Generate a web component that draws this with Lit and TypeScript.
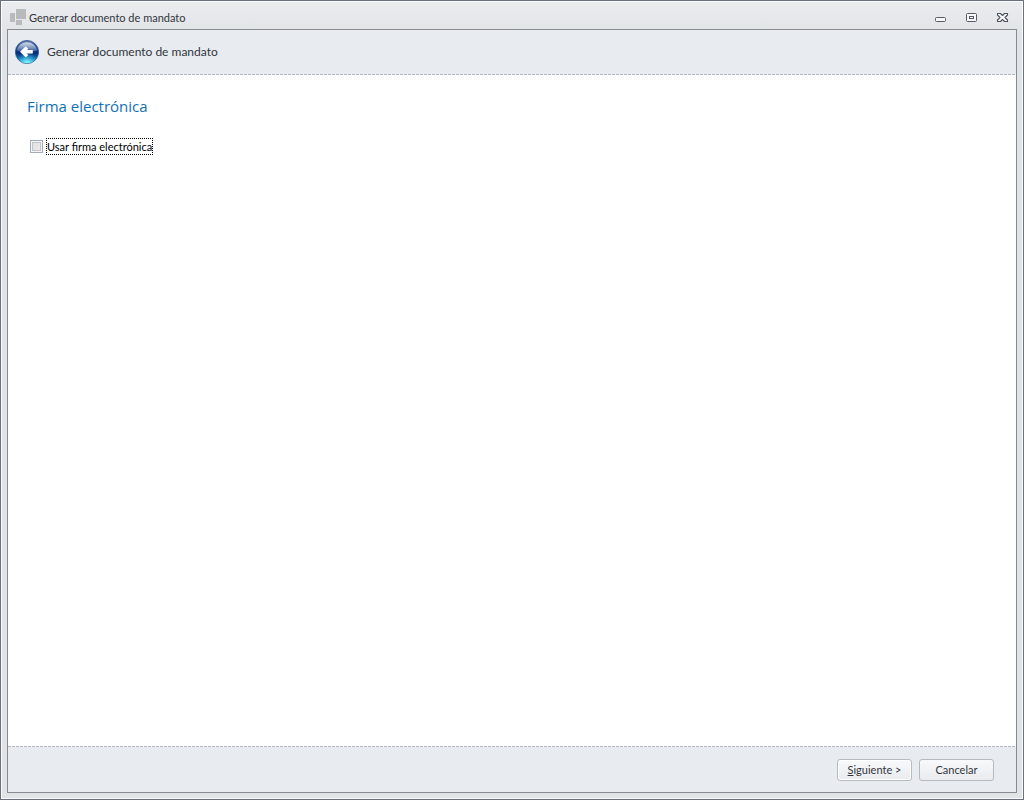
import { LitElement, html, css, svg } from "lit";
import { customElement, state } from "lit/decorators.js";

const TITLE = "Generar documento de mandato";

const appIcon = svg`
  <svg width="16" height="16" viewBox="0 0 16 16" shape-rendering="crispEdges" aria-hidden="true">
    <g fill="#b9babb">
      <rect x="0" y="4" width="5" height="9"></rect>
      <rect x="6" y="0" width="10" height="10"></rect>
      <rect x="6" y="11" width="6" height="5"></rect>
    </g>
  </svg>`;

const backIcon = svg`
  <svg width="26" height="26" viewBox="0 0 26 26" aria-hidden="true">
    <defs>
      <linearGradient id="ball" x1="0" y1="0" x2="0" y2="1">
        <stop offset="0" stop-color="#5a7cb4"></stop>
        <stop offset="0.4" stop-color="#17408c"></stop>
        <stop offset="0.55" stop-color="#052a78"></stop>
        <stop offset="0.78" stop-color="#1272b4"></stop>
        <stop offset="1" stop-color="#5fe6f4"></stop>
      </linearGradient>
      <linearGradient id="shine" x1="0" y1="0" x2="0" y2="1">
        <stop offset="0" stop-color="#ffffff" stop-opacity="0.75"></stop>
        <stop offset="1" stop-color="#ffffff" stop-opacity="0.12"></stop>
      </linearGradient>
      <radialGradient id="glow" cx="0.5" cy="1" r="0.5">
        <stop offset="0" stop-color="#8dfcff"></stop>
        <stop offset="1" stop-color="#2bb4e0" stop-opacity="0"></stop>
      </radialGradient>
    </defs>
    <circle cx="13" cy="13" r="11.6" fill="url(#ball)" stroke="#3a5a94" stroke-width="0.8"></circle>
    <circle cx="13" cy="13" r="11.2" fill="url(#glow)"></circle>
    <path d="M2.8 11.5A10.4 10.4 0 0 1 23.2 11.5Q13 15 2.8 11.5Z" fill="url(#shine)"></path>
    <path d="M13 8.4L8.6 12.8L13 17.2M9 12.8H18.8"
      fill="none" stroke="#fff" stroke-width="3.6" stroke-linejoin="miter"></path>
  </svg>`;

const minimizeIcon = svg`
  <svg width="13" height="11" viewBox="0 0 13 11" aria-hidden="true">
    <rect x="1.5" y="5.5" width="10" height="4" rx="1" fill="#f6f7f8" stroke="#555b66"></rect>
  </svg>`;

const maximizeIcon = svg`
  <svg width="13" height="11" viewBox="0 0 13 11" aria-hidden="true">
    <rect x="1.5" y="1.5" width="10" height="8" rx="1" fill="#f6f7f8" stroke="#555b66"></rect>
    <rect x="4.5" y="4.5" width="4" height="2" fill="#f6f7f8" stroke="#555b66"></rect>
  </svg>`;

const closeIcon = svg`
  <svg width="13" height="11" viewBox="0 0 13 11" aria-hidden="true">
    <path d="M1.5 1.5H4.5L6.5 3.5L8.5 1.5H11.5V3L9 5.5L11.5 8V9.5H8.5L6.5 7.5L4.5 9.5H1.5V8L4 5.5L1.5 3Z"
      fill="#f6f7f8" stroke="#4d535e" stroke-width="1.1" stroke-linejoin="round"></path>
  </svg>`;

@customElement("app-root")
export class AppRoot extends LitElement {
  @state() private useSignature = false;

  static styles = css`
    :host {
      display: block;
      font-family: Lato, "Noto Sans", sans-serif;
      font-size: 11px;
      color: #32363c;
      --dashes: repeating-linear-gradient(90deg, #b3b9c6 0 3px, #f1f3f6 3px 4px);
    }
    * {
      box-sizing: border-box;
    }
    svg {
      display: block;
    }
    .window {
      display: flex;
      flex-direction: column;
      min-height: 100vh;
      padding: 0 6px 6px;
      border: 1px solid #6b717c;
      box-shadow: inset 0 0 0 1px #fcfcfd;
      background: linear-gradient(#ebecef, #e1e4e7 32px);
    }
    .titlebar {
      display: flex;
      align-items: center;
      gap: 3px;
      height: 28px;
      padding: 4px 8px 0 3px;
    }
    .caption {
      flex: 1;
      padding-top: 1px;
      line-height: 16px;
    }
    .tools {
      display: flex;
      gap: 18px;
    }
    .tool,
    .back {
      padding: 0;
      border: 0;
      background: none;
    }
    .wizard {
      flex: 1;
      display: flex;
      flex-direction: column;
      border: 1px solid #868b92;
      background: #fff;
    }
    .header {
      display: flex;
      align-items: center;
      gap: 7px;
      height: 45px;
      padding: 0 6px 1px;
      background: var(--dashes) bottom / 100% 1px no-repeat #e8ebf0;
    }
    .name {
      font-size: 12px;
      line-height: 16px;
    }
    .page {
      flex: 1;
      padding: 19px;
    }
    .heading {
      margin: 0;
      font-family: "Open Sans", sans-serif;
      font-size: 15px;
      font-weight: 400;
      line-height: 24px;
      color: #1271b5;
    }
    .option {
      display: flex;
      align-items: center;
      gap: 3px;
      margin: 20px 0 0 3px;
      color: #000;
    }
    .check {
      appearance: none;
      width: 13px;
      height: 13px;
      margin: 0;
      border: 1px solid #a3abb6;
      outline: none;
      background: linear-gradient(135deg, #dcdcdc, #f0f0f0);
      box-shadow: inset 0 0 0 1px #f4f5f6, inset 0 0 0 2px #c3c5c8;
    }
    .check:checked {
      background: #4a6a9a;
    }
    .check-label {
      border: 1px dotted #000;
      line-height: 15px;
    }
    .footer {
      display: flex;
      justify-content: flex-end;
      gap: 7px;
      padding: 13px 22px 11px;
      background: var(--dashes) top / 100% 1px no-repeat #e8ebf0;
    }
    .button {
      width: 75px;
      height: 22px;
      padding: 0;
      border: 1px solid #b5bac3;
      border-radius: 3px;
      background: linear-gradient(#f8f9fa, #e9ebef);
      font: inherit;
      line-height: 20px;
      color: inherit;
    }
    .default {
      box-shadow: inset 0 0 0 1px #fff;
    }
  `;

  private toggle(event: Event) {
    this.useSignature = (event.target as HTMLInputElement).checked;
  }

  render() {
    return html`
      <div class="window">
        <div class="titlebar">
          ${appIcon}
          <span class="caption">${TITLE}</span>
          <div class="tools">
            <button class="tool" aria-label="Minimizar">${minimizeIcon}</button>
            <button class="tool" aria-label="Maximizar">${maximizeIcon}</button>
            <button class="tool" aria-label="Cerrar">${closeIcon}</button>
          </div>
        </div>
        <main class="wizard">
          <header class="header">
            <button class="back" aria-label="Atrás">${backIcon}</button>
            <span class="name">${TITLE}</span>
          </header>
          <section class="page">
            <h1 class="heading">Firma electrónica</h1>
            <div class="option">
              <input class="check" type="checkbox" id="use-signature"
                .checked=${this.useSignature} @change=${this.toggle} />
              <label class="check-label" for="use-signature">Usar firma electrónica</label>
            </div>
          </section>
          <footer class="footer">
            <button class="button default"><u>S</u>iguiente &gt;</button>
            <button class="button">Cancelar</button>
          </footer>
        </main>
      </div>
    `;
  }
}
